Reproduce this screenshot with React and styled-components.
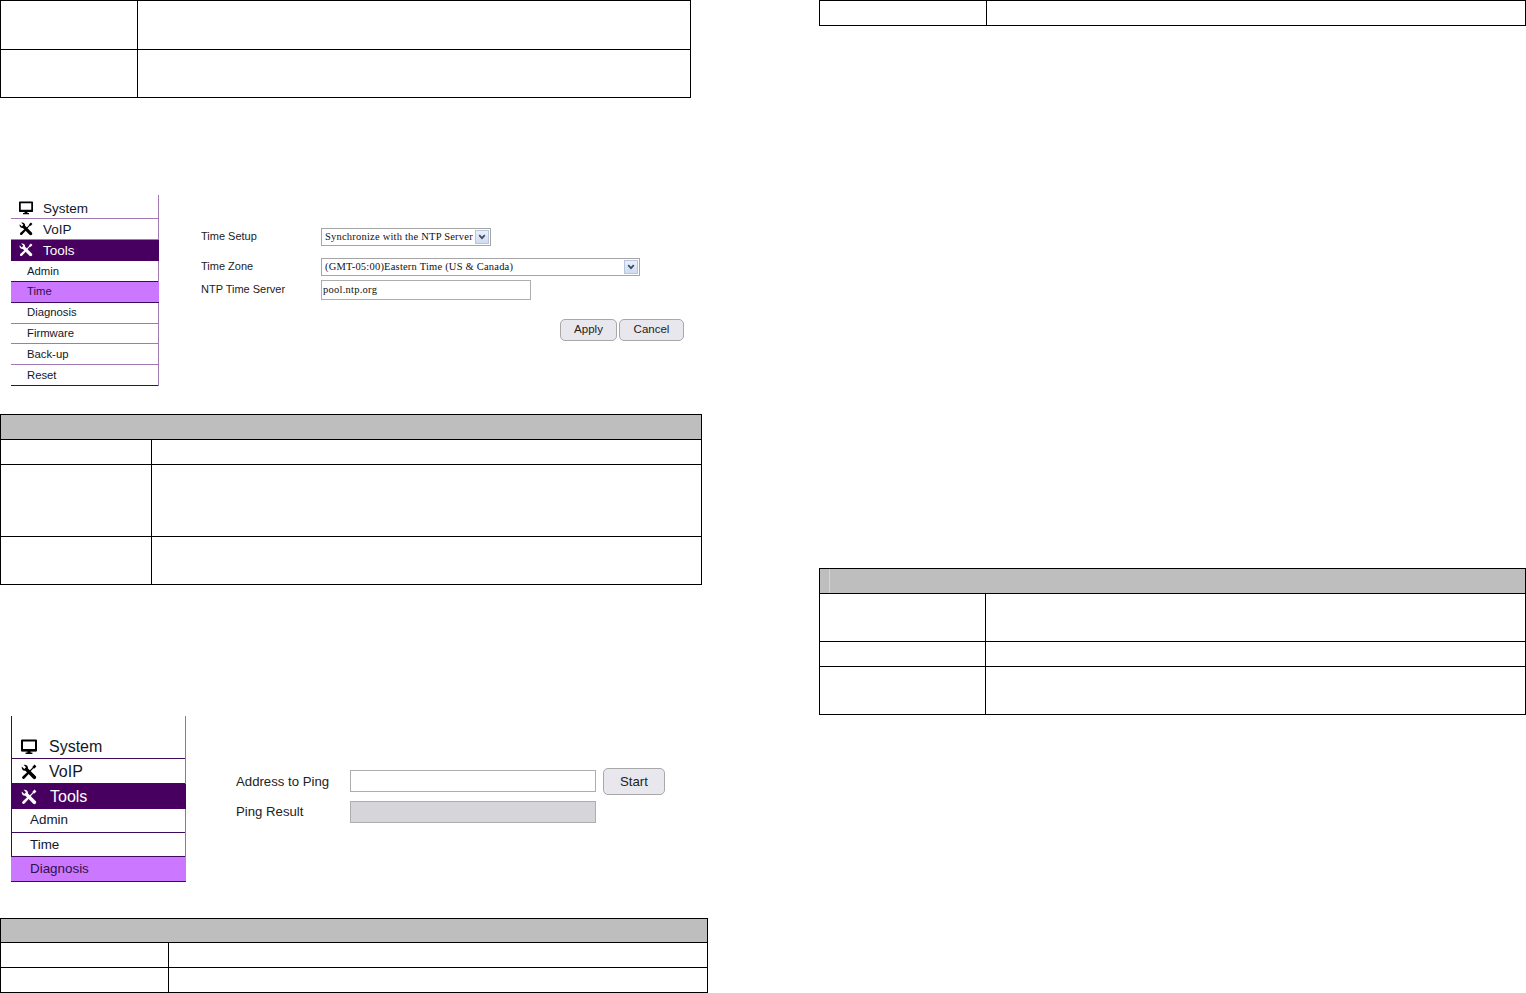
import React from 'react';
import styled, { createGlobalStyle } from 'styled-components';

const GlobalStyle = createGlobalStyle`
    html, body {
        margin: 0;
        padding: 0;
        background: #fff;
    }
    body {
        font-family: "Liberation Sans", Arial, sans-serif;
        color: #000;
    }
`;

const Page = styled.div`
    display: flex;
    width: 1526px;
    height: 993px;
    overflow: hidden;
`;

const LeftColumn = styled.div`
    display: flex;
    flex-direction: column;
    width: 708px;
`;

const RightColumn = styled.div`
    display: flex;
    flex-direction: column;
    width: 707px;
    margin-left: 111px;
`;

const Table = styled.div`
    box-sizing: border-box;
    width: ${(p) => p.$width || '100%'};
    margin-top: ${(p) => p.$top || 0}px;
    border: 1px solid #000;
    border-bottom: 0;
`;

const HeadRow = styled.div`
    position: relative;
    box-sizing: border-box;
    height: ${(p) => p.$height}px;
    background: #bebebe;
    border-bottom: 1px solid #000;
`;

const HeadStrip = styled.span`
    position: absolute;
    left: 9px;
    top: 0;
    bottom: 0;
    width: 1px;
    background: #d6d6d6;
`;

const Row = styled.div`
    box-sizing: border-box;
    display: grid;
    grid-template-columns: ${(p) => p.$label}px 1fr;
    height: ${(p) => p.$height}px;
    border-bottom: 1px solid #000;
`;

const LabelCell = styled.div`
    border-right: 1px solid #000;
`;

const ValueCell = styled.div``;

const Section = styled.div`
    display: flex;
    margin-top: ${(p) => p.$top}px;
    margin-left: 11px;
`;

const Menu = styled.div`
    box-sizing: border-box;
    display: flex;
    flex-direction: column;
    flex: none;
    width: ${(p) => p.$width}px;
    border-right: 1px solid ${(p) => p.$edge};
    border-left: ${(p) => (p.$boxed ? '1px solid #3e0a5e' : '0')};
`;

const MenuRow = styled.div`
    box-sizing: border-box;
    display: flex;
    align-items: center;
    height: ${(p) => p.$height}px;
    padding-top: ${(p) => p.$pad || 0}px;
    padding-bottom: ${(p) => p.$lift || 0}px;
    padding-left: ${(p) => p.$indent + (p.$boxed && (p.$dark || p.$active) ? 1 : 0)}px;
    font-size: ${(p) => p.$size}px;
    color: ${(p) => (p.$dark ? '#fff' : p.$active ? '#30104a' : '#10182c')};
    background: ${(p) => (p.$dark ? '#470060' : p.$active ? '#cc77ff' : '#fff')};
    border-bottom: 1px solid ${(p) => p.$line};
    margin-right: ${(p) => (p.$dark || p.$active ? '-1px' : 0)};
    margin-left: ${(p) => (p.$boxed && (p.$dark || p.$active) ? '-1px' : 0)};
`;

const IconSlot = styled.span`
    display: inline-flex;
    align-items: center;
    flex: none;
    box-sizing: border-box;
    width: ${(p) => p.$width}px;
    padding-left: ${(p) => p.$inset}px;
`;

const MenuText = styled.span`
    margin-left: ${(p) => p.$shift || 0}px;
`;

const FormPanel = styled.div`
    display: flex;
    flex-direction: column;
    flex: none;
    width: ${(p) => p.$width}px;
    margin-left: ${(p) => p.$left}px;
    padding-top: ${(p) => p.$top}px;
`;

const FieldRow = styled.div`
    display: flex;
    align-items: center;
    margin-top: ${(p) => p.$gap || 0}px;
`;

const FieldLabel = styled.label`
    flex: none;
    width: ${(p) => p.$width}px;
    padding-bottom: ${(p) => p.$lift || 0}px;
    font-size: ${(p) => p.$size}px;
    color: #222;
`;

const SelectBox = styled.div`
    box-sizing: border-box;
    display: flex;
    align-items: center;
    justify-content: space-between;
    width: ${(p) => p.$width}px;
    height: 18px;
    padding: 0 1px 2px 3px;
    border: 1px solid #a5a5a5;
    font-family: "Liberation Serif", "Times New Roman", serif;
    font-size: 10.5px;
    letter-spacing: 0.21px;
    color: #111;
    white-space: nowrap;
`;

const SelectArrow = styled.span`
    display: inline-flex;
    align-items: center;
    justify-content: center;
    box-sizing: border-box;
    width: 14px;
    height: 14px;
    margin-bottom: -2px;
    border: 1px solid #b7c6dc;
    background: linear-gradient(#eaf0fa, #cfdcf0);
`;

const TextBox = styled.input`
    box-sizing: border-box;
    width: ${(p) => p.$width}px;
    height: ${(p) => p.$height}px;
    margin: 0 0 ${(p) => p.$lift || 0}px;
    padding: 0 1px 2px;
    border: 1px solid #adadad;
    border-radius: 0;
    outline: 0;
    font-family: "Liberation Serif", "Times New Roman", serif;
    font-size: 10.5px;
    letter-spacing: 0.25px;
    color: #111;
    background: ${(p) => (p.disabled ? '#d5d5da' : '#fff')};
`;

const ActionRow = styled.div`
    display: flex;
    justify-content: flex-end;
    gap: 2px;
    margin-top: 19px;
`;

const PushButton = styled.button`
    box-sizing: border-box;
    width: ${(p) => p.$width}px;
    height: ${(p) => p.$height}px;
    padding: 0 0 ${(p) => p.$lift || 0}px;
    margin-left: ${(p) => p.$left || 0}px;
    border: 1px solid #a8a8a8;
    border-radius: 5px;
    background: #e9e7ee;
    font-family: "Liberation Sans", Arial, sans-serif;
    font-size: ${(p) => p.$size}px;
    color: #222;
`;

const Chevron = () => (
    <svg width="8" height="6" viewBox="0 0 8 6">
        <path d="M1.2 1.2 L4 4.2 L6.8 1.2" fill="none" stroke="#3c4a66" strokeWidth="1.7" />
    </svg>
);

const MonitorIcon = ({ size }) => (
    <svg width={size} height={size} viewBox="0 0 16 16">
        <path d="M1 1.5 H15 V11.5 H1 Z" fill="#fff" stroke="#000" strokeWidth="2" strokeLinejoin="round" />
        <path d="M0.5 10 H15.5 V12.2 H0.5 Z M6.4 12 H9.6 V13.6 H11.4 V15 H4.6 V13.6 H6.4 Z" fill="#000" />
    </svg>
);

const ToolsIcon = ({ size, color }) => (
    <svg width={size} height={size} viewBox="0 0 16 16" fill={color}>
        <path d="M2.6 0.8 L5 3.2 L3.3 5 L0.8 2.6 C0.2 5 1.8 7 4.4 6.8 L12 14.6 C12.8 15.3 14 15.3 14.7 14.6 C15.4 13.8 15.3 12.7 14.6 12 L7 4.4 C7.3 2 5.2 0.2 2.6 0.8 Z" />
        <path d="M13.6 0.6 L15.4 2.4 L13.4 4.4 L12.4 4.2 L8.6 8.4 L7.6 7.4 L11.6 3.4 L11.6 2.6 Z" />
        <path d="M7.5 7 L9 8.6 L4.5 13.4 C3.7 14.6 2.4 15.4 1.5 14.6 C0.6 13.6 1.4 12.3 2.6 11.5 Z" />
    </svg>
);

const firstMenu = {
    width: 148,
    edge: '#a07ab0',
    indent: 16,
    rows: [
        { label: 'System', icon: 'monitor', height: 24, pad: 3, line: '#a07ab0' },
        { label: 'VoIP', icon: 'tools', height: 21, line: '#a07ab0' },
        { label: 'Tools', icon: 'tools', height: 21, dark: true, line: '#470060' },
        { label: 'Admin', height: 21, line: '#3e0a5e' },
        { label: 'Time', height: 21, lift: 2, active: true, line: '#3e0a5e' },
        { label: 'Diagnosis', height: 21, lift: 2, line: '#a07ab0' },
        { label: 'Firmware', height: 20, lift: 2, line: '#a07ab0' },
        { label: 'Back-up', height: 21, line: '#a07ab0' },
        { label: 'Reset', height: 21, line: '#3e0a5e' },
    ],
};

const secondMenu = {
    width: 175,
    edge: '#8d7a9b',
    boxed: true,
    indent: 18,
    rows: [
        { label: 'System', icon: 'monitor', height: 43, pad: 20, line: '#3e0a5e' },
        { label: 'VoIP', icon: 'tools', height: 25, pad: 2, line: '#3e0a5e' },
        { label: 'Tools', icon: 'tools', height: 25, pad: 2, shift: 1, dark: true, line: '#470060' },
        { label: 'Admin', height: 24, lift: 2, line: '#3e0a5e' },
        { label: 'Time', height: 24, line: '#3e0a5e' },
        { label: 'Diagnosis', height: 25, lift: 2, active: true, line: '#3e0a5e' },
    ],
};

const SideMenu = ({ menu, topSize, subSize, iconSize, iconWidth, iconInset }) => (
    <Menu $width={menu.width} $edge={menu.edge} $boxed={menu.boxed}>
        {menu.rows.map((row) => (
            <MenuRow
                key={row.label}
                $height={row.height}
                $pad={row.pad}
                $lift={row.lift}
                $line={row.line}
                $dark={row.dark}
                $active={row.active}
                $boxed={menu.boxed}
                $indent={row.icon ? 0 : menu.indent}
                $size={row.icon ? topSize : subSize}
            >
                {row.icon && (
                    <IconSlot $width={iconWidth} $inset={iconInset}>
                        {row.icon === 'monitor' ? (
                            <MonitorIcon size={iconSize} />
                        ) : (
                            <ToolsIcon size={iconSize} color={row.dark ? '#fff' : '#000'} />
                        )}
                    </IconSlot>
                )}
                <MenuText $shift={row.shift}>{row.label}</MenuText>
            </MenuRow>
        ))}
    </Menu>
);

const DataTable = ({ width, top, label, head, rows, strip }) => (
    <Table $width={width} $top={top}>
        {head && <HeadRow $height={head}>{strip && <HeadStrip />}</HeadRow>}
        {rows.map((height, i) => (
            <Row key={i} $label={label} $height={height}>
                <LabelCell />
                <ValueCell />
            </Row>
        ))}
    </Table>
);

const App = () => (
    <Page>
        <GlobalStyle />
        <LeftColumn>
            <DataTable width="691px" label={137} rows={[49, 48]} />

            <Section $top={97}>
                <SideMenu menu={firstMenu} topSize={13.5} subSize={11.3} iconSize={14} iconWidth={32} iconInset={8} />
                <FormPanel $width={483} $left={42} $top={33}>
                    <FieldRow>
                        <FieldLabel $width={120} $size={11} $lift={2}>Time Setup</FieldLabel>
                        <SelectBox $width={170}>
                            Synchronize with the NTP Server
                            <SelectArrow><Chevron /></SelectArrow>
                        </SelectBox>
                    </FieldRow>
                    <FieldRow $gap={12}>
                        <FieldLabel $width={120} $size={11} $lift={2}>Time Zone</FieldLabel>
                        <SelectBox $width={319}>
                            (GMT-05:00)Eastern Time (US &amp; Canada)
                            <SelectArrow><Chevron /></SelectArrow>
                        </SelectBox>
                    </FieldRow>
                    <FieldRow $gap={4}>
                        <FieldLabel $width={120} $size={11} $lift={2}>NTP Time Server</FieldLabel>
                        <TextBox $width={210} $height={20} defaultValue="pool.ntp.org" />
                    </FieldRow>
                    <ActionRow>
                        <PushButton $width={57} $height={22} $size={11.5} $lift={2}>Apply</PushButton>
                        <PushButton $width={65} $height={22} $size={11.5} $lift={2}>Cancel</PushButton>
                    </ActionRow>
                </FormPanel>
            </Section>

            <DataTable width="702px" top={28} label={151} head={25} rows={[25, 72, 48]} />

            <Section $top={131}>
                <SideMenu menu={secondMenu} topSize={16} subSize={13.4} iconSize={16} iconWidth={37} iconInset={9} />
                <FormPanel $width={430} $left={50} $top={52}>
                    <FieldRow>
                        <FieldLabel $width={114} $size={13.2}>Address to Ping</FieldLabel>
                        <TextBox $width={246} $height={22} $lift={2} />
                        <PushButton $width={62} $height={27} $size={13.2} $left={7}>Start</PushButton>
                    </FieldRow>
                    <FieldRow $gap={6}>
                        <FieldLabel $width={114} $size={13.2} $lift={2}>Ping Result</FieldLabel>
                        <TextBox $width={246} $height={22} disabled />
                    </FieldRow>
                </FormPanel>
            </Section>

            <DataTable width="708px" top={36} label={168} head={24} rows={[25, 25]} />
        </LeftColumn>

        <RightColumn>
            <DataTable label={167} rows={[25]} />
            <DataTable top={542} label={166} head={25} rows={[48, 25, 48]} strip />
        </RightColumn>
    </Page>
);

export default App;
